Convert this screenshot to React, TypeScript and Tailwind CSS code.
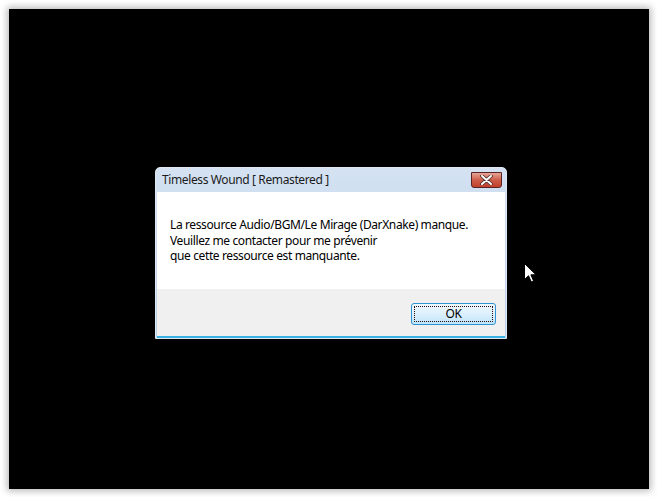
export default function App() {
  return (
    <div className="w-[657px] h-[497px] bg-white pl-[9px] pt-[9px]" style={{ fontFamily: '"Noto Sans", "Open Sans", sans-serif' }}>
      <div className="relative w-[640px] h-[480px] bg-black shadow-[0_0_7px_2px_rgba(0,0,0,0.28)]">
        {/* message box */}
        <div className="absolute left-[146px] top-[158px] w-[352px] h-[172px] flex flex-col rounded-t-[5px] border border-[#dfe8f2] bg-gradient-to-b from-[#d4e2f2] to-[#b9d1ea] px-px tracking-[-0.38px]">
          <div className="relative h-[24px] flex items-center pl-[5px] text-[12px] text-[#1b1b1b]">
            Timeless Wound [ Remastered ]
            <div className="absolute right-[3px] top-[4px] w-[31px] h-[16px] rounded-b-[3px] border border-[#5a2424] bg-gradient-to-b from-[#e5a598] via-[#cd5c49] to-[#c0402b] flex items-center justify-center">
              <svg width="13" height="10" viewBox="0 0 13 10">
                <path d="M2 1 L11 9 M11 1 L2 9" stroke="#4a2a2a" strokeWidth="3.6" strokeLinecap="round" />
                <path d="M2 1 L11 9 M11 1 L2 9" stroke="#ffffff" strokeWidth="2" strokeLinecap="round" />
              </svg>
            </div>
          </div>
          <div className="flex-1 flex flex-col bg-white">
            <div className="h-[97px] pl-[13px] pt-[25px] text-[12px] leading-[15.5px] text-black">
              <p>La ressource Audio/BGM/Le Mirage (DarXnake) manque.</p>
              <p>Veuillez me contacter pour me prévenir</p>
              <p>que cette ressource est manquante.</p>
            </div>
            <div className="flex-1 bg-[#f0f0f0] flex justify-end items-start pt-[14px] pr-[9px] border-b-2 border-[#3bb1e2]">
              <button className="w-[85px] h-[22px] rounded-[3px] border border-[#2f93d3] bg-gradient-to-b from-[#eef8fe] via-[#dcf0fc] to-[#bde4f9] p-[2px]">
                <span className="flex h-full w-full items-center justify-center border border-dotted border-[#2a0a0a] text-[12px] text-black leading-none">
                  OK
                </span>
              </button>
            </div>
          </div>
        </div>

        {/* mouse cursor */}
        <svg className="absolute left-[515px] top-[254px]" width="13" height="20" viewBox="0 0 13 20">
          <path d="M0.5 0.5 L0.5 16.5 L4.5 12.7 L7.3 19 L9.6 18 L6.9 11.8 L12 11.8 Z" fill="#ffffff" stroke="#000000" strokeWidth="1" strokeLinejoin="round" />
        </svg>
      </div>
    </div>
  );
}
